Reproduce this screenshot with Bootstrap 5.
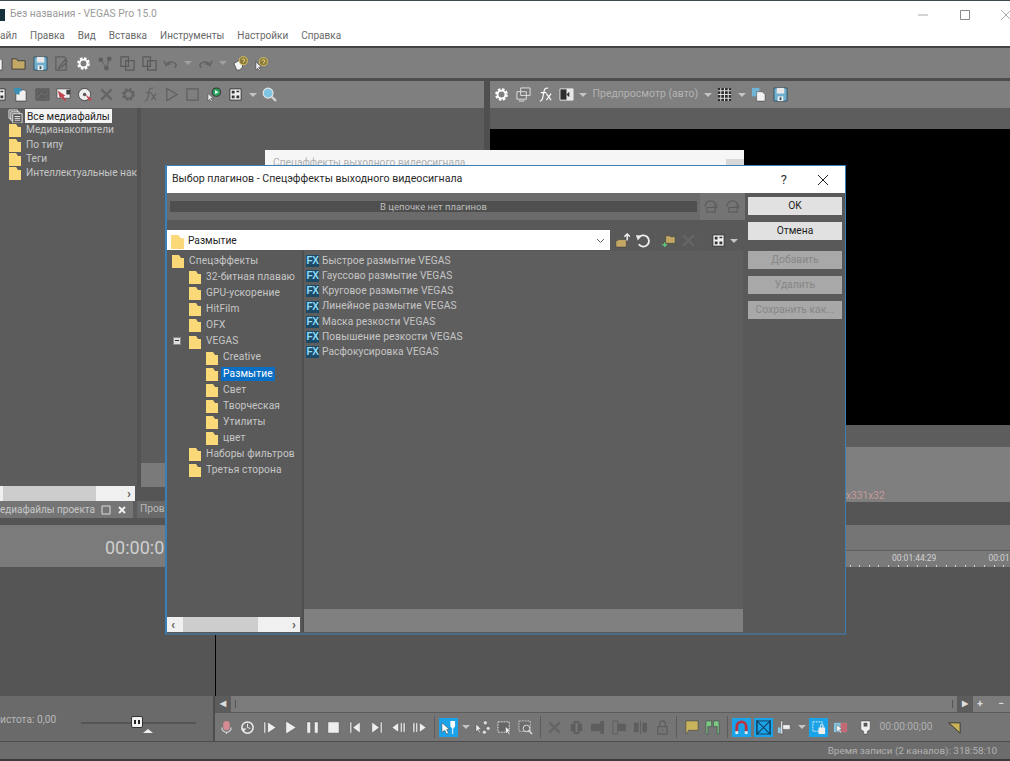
<!DOCTYPE html>
<html lang="ru">
<head>
<meta charset="UTF-8">
<title>Без названия - VEGAS Pro 15.0</title>
<link href="https://cdn.jsdelivr.net/npm/bootstrap@5.3.0/dist/css/bootstrap.min.css" rel="stylesheet">
<style>
body { width: 1010px; height: 761px; overflow: hidden; background: #555; font: 10.200px/1.2 Roboto, sans-serif; color: #c6c6c6; position: relative; }
.ic { width: 15px; height: 15px; flex: none; display: block; }
.dd { width: 0; height: 0; flex: none; border: 4px solid transparent; border-top: 4px solid #c4c4c4; border-bottom: 0; margin: 0 -1px; }
.dd.dim { border-top-color: #a0a0a0; }
.sep { width: 1px; height: 22px; background: #5c5c5c; flex: none; }

.title-row { height: 46px; background: #fff; border-top: 1px solid #3f4a4e; color: #9a9a9a; }
.cap { height: 27px; font-size: 10.300px; }
.logo { width: 5px; height: 12px; background: #16303c; margin-right: 5px; }
.win-btns { gap: 29.500px; margin-right: -2px; }
.menu { gap: 13px; color: #6a6a6a; font-size: 10px; padding-top: 2px; }
.bar-dark { height: 2px; background: #444; }
.main-tool { height: 30px; background: #7f7f7f; gap: 6.800px; padding-left: 10px; }
.main-tool .first { margin-left: -21px; }
.bar-mid { height: 3px; background: #4d4d4d; }

.upper { height: 444px; }
.left-col { width: 484px; }
.gap-col { width: 6px; background: #4f4f4f; }
.right-col { width: 520px; }
.tool { height: 27px; background: #7f7f7f; }
.tool-media { gap: 6.500px; padding-left: 12.500px; }
.tool-media .first { margin-left: -21px; }
.tool-preview { gap: 6.500px; padding-left: 4px; color: #b4b4b4; font-size: 10.500px; }

.explorer { height: 378px; background: #5c5c5c; padding-top: 1px; }
.ex-tree { width: 137px; }
.ex-tree li { height: 14.300px; padding-left: 9px; gap: 5px; white-space: nowrap; overflow: hidden; }
.ex-tree .fold { width: 12px; height: 14px; flex: none; }
.ex-tree .all { width: 15px; height: 15px; flex: none; margin-left: -1px; margin-right: -3px; }
.ex-tree .sel { background: #f4f4f4; color: #222; padding: 0 2px; height: 15px; line-height: 15px; }
.ex-split { width: 4px; background: #525252; margin-top: -1px; }
.ex-side { width: 24px; height: 24px; background: #7a7a7a; margin-top: auto; margin-bottom: -1px; }
.ex-scroll { height: 15px; width: 135px; background: #f0f0f0; }
.ex-scroll .thumb { width: 93px; height: 100%; background: #cdcdcd; margin-left: 3px; }
.arrow-txt { color: #555; font-size: 13px; font-weight: 700; }
.tabs { height: 17px; background: #5c5c5c; }
.tab-on { width: 133px; flex: none; background: #757575; padding-right: 6px; white-space: nowrap; overflow: hidden; justify-content: flex-end; gap: 6px; font-size: 10px; }
.tab-on span, .tab-on svg { flex: none; }
.tab-off { margin-left: 4px; flex: 1; background: #696969; padding-left: 3px; white-space: nowrap; overflow: hidden; color: #b8b8b8; }

.prev-gap { height: 21px; background: #5d5d5d; }
.prev-black { height: 296px; background: #000; }
.prev-a { height: 22px; background: #5d5d5d; }
.prev-info { height: 55px; background: #7f7f7f; color: #c49a9a; padding-left: 356px; }
.prev-info span { padding-top: 43px; }
.prev-b { height: 23px; background: #555; }
.left-dark { height: 7px; background: #555; }

.lower { height: 171px; }
.time-panel { width: 216px; flex: none; border-right: 1px solid #000; }
.time-box { height: 42px; background: #7b7b7b; color: #cfcfcf; font-size: 18px; padding: 3px 0 0 105px; white-space: nowrap; overflow: hidden; }
.track-head { height: 26px; background: #757575; border-bottom: 1px solid #5f5f5f; }
.ruler { height: 16px; background: #7a7a7a; font-size: 8.500px; color: #d2d2d2; white-space: nowrap; padding: 2px 0 0 676px; gap: 52px; background-image: repeating-linear-gradient(90deg, #cfcfcf 0 1px, transparent 1px 9.600px); background-size: 100% 2px; background-repeat: no-repeat; background-position: 0 100%; }
.tl-end { width: 2px; background: #4b4b4b; height: 42px; flex: none; }

.bottom { height: 45px; }
.bot-left { width: 213px; flex: none; background: #6a6a6a; color: #b8b8b8; }
.bot-gap { width: 2px; flex: none; background: #4d4d4d; }
.freq { width: 81px; flex: none; margin-top: 4px; white-space: nowrap; }
.slider { width: 115px; height: 2px; flex: none; background: #555; position: relative; margin-top: 8px; }
.slider .knob { position: absolute; left: 50px; top: -6px; width: 12px; height: 12px; background: #f2f2f2; border: 1px solid #333; border-radius: 2px; }
.slider .knob::before { content: ""; position: absolute; left: 2px; top: 3px; width: 6px; height: 4px; border-left: 2px solid #222; border-right: 2px solid #222; }
.slider .tri { position: absolute; left: 62px; top: 7px; border: 5px solid transparent; border-bottom: 4px solid #eee; border-top: 0; }
.scroll-row { height: 17px; background: #7b7b7b; border-bottom: 1px solid #5c5c5c; color: #ddd; font-weight: 700; }
.sc-btn { width: 16px; height: 100%; flex: none; background: #5c5c5c; font-size: 8px; }
.sc-tick { width: 1px; height: 8px; background: #555; }
.sc-plus { width: 14px; flex: none; text-align: center; }
.sc-minus { width: 23px; flex: none; padding-left: 5px; text-align: center; }
.transport { height: 28px; background: #757575; gap: 6.500px; padding-left: 3.500px; color: #b0b0b0; white-space: nowrap; }
.on { background: #1aa3e8; outline: 2px solid #1aa3e8; }
.status { height: 18px; background: #6c6c6c; border-top: 1px solid #4c4c4c; color: #b2b2b2; padding-right: 13px; font-size: 9.900px; }
.foot { height: 2px; background: #3a3a3a; }

.back-win { position: absolute; left: 265px; top: 150px; width: 479px; height: 17px; background: #f6f6f6; color: #b0b0b0; padding: 7px 8px 0; overflow: hidden; }
.back-win::after { content: ""; position: absolute; right: 0; bottom: 0; width: 18px; height: 8px; background: #d8d8d8; }
.dlg { position: absolute; left: 165px; top: 165px; width: 681px; height: 470px; background: #595959; border: 1px solid #3a7fb5; border-bottom: 2px solid #4a6a88; border-left-width: 2px; }
.dlg-title { height: 27px; background: #fff; color: #2a2a2a; font-size: 10.600px; padding-left: 5px; }
.dlg-title .help { font-size: 13px; margin-right: 30px; color: #333; }
.dlg-main { width: 578px; flex: none; }
.chain { height: 27px; }
.chain-bar { width: 533px; flex: none; background: #6b6b6b; padding: 8px 3px; }
.chain-in { height: 100%; background: #4f4f4f; color: #bdbdbd; font-size: 9.500px; text-align: center; line-height: 12px; }
.chain-ic { width: 45px; flex: none; background: #747474; gap: 7px; }
.combo-row { height: 31px; padding-top: 10px; }
.combo { width: 443px; height: 20px; flex: none; background: #fff; color: #222; padding: 2px 5px 0 3px; gap: 3px; }
.combo-ic { gap: 5px; padding-left: 5px; }
.panes { height: 381px; }
.tree { width: 135px; background: #5a5a5a; padding-top: 2px; letter-spacing: .12px; }
.tree li { height: 16.100px; white-space: nowrap; gap: 5px; position: relative; }
.l0 { padding-left: 5px; }
.l1 { padding-left: 22px; }
.l2 { padding-left: 39px; }
.tree .fold { width: 12px; height: 14px; flex: none; }
.tree .now { background: #0a6fc4; color: #fff; padding: 1px 2px; margin-left: -2px; }
.minus { position: absolute; left: 6px; top: 4px; width: 8px; height: 8px; background: #ddd; border: 1px solid #888; }
.minus::before { content: ""; position: absolute; left: 1px; top: 2px; width: 4px; height: 1px; background: #333; }
.tree-scroll { height: 15px; width: 133px; background: #f0f0f0; color: #555; }
.tree-scroll .thumb { width: 75px; height: 100%; background: #cdcdcd; margin-left: 8px; }
.split { width: 2px; flex: none; background: #4e4e4e; }
.fx-list { width: 439px; flex: none; }
.fx-items { height: 358px; background: #5e5e5e; padding-top: 2px; letter-spacing: .1px; }
.fx-items li { height: 15.300px; padding-left: 2px; gap: 3px; white-space: nowrap; }
.fx { width: 13px; height: 12px; background: #1d4a66; color: #8fdcf8; font: 700 10px/12px "Liberation Sans", sans-serif; letter-spacing: -.5px; text-align: center; flex: none; }
.fx-tail { height: 23px; background: #808080; }
.dlg-side { width: 100px; padding: 4px 3px 0 3px; }
.btn-pl { --bs-btn-padding-y: 0; --bs-btn-padding-x: 0; --bs-btn-font-size: 10.300px; --bs-btn-border-radius: 0; --bs-btn-border-width: 0; --bs-btn-bg: #e1e1e1; --bs-btn-color: #1d1d1d; --bs-btn-disabled-bg: #a8a8a8; --bs-btn-disabled-color: #868686; --bs-btn-disabled-opacity: 1; height: 18px; width: 94px; line-height: 18px; }
.btn-pl + .btn-pl { margin-top: 7px; }
.btn-pl + .btn-pl.add { margin-top: 11px; }
</style>
</head>
<body>
<svg width="0" height="0" class="position-absolute">
  <defs>
    <symbol id="fold" viewBox="0 0 12 14"><path d="M0 1h7l2 3h3v10H0z" fill="#fbd978"/></symbol>
    <symbol id="tan" viewBox="0 0 16 16"><path d="M1 3h5l1 2h8v9H1z" fill="#c2a765" stroke="#3c3c3c"/></symbol>
    <symbol id="save" viewBox="0 0 16 16"><path d="M1 1h14v14H1z" fill="#6fb0d0" stroke="#33505f"/><path d="M4 1h8v6H4z" fill="#e8e8e8"/><path d="M5 10h6v5H5z" fill="#f0f0f0"/><path d="M7 11h2v3H7z" fill="#33505f"/></symbol>
    <symbol id="gear" viewBox="0 0 16 16"><circle cx="8" cy="8" r="5.500" fill="none" stroke="currentColor" stroke-width="2.600" stroke-dasharray="2.600 1.700"/><circle cx="8" cy="8" r="4.200" fill="none" stroke="currentColor" stroke-width="2"/></symbol>
    <symbol id="note" viewBox="0 0 16 16"><path d="M2 1h9l2 2v12H2zM6 11l6-7 2 2-6 6-3 1z" fill="none" stroke="#5e5e5e" stroke-width="1.300"/></symbol>
    <symbol id="branch" viewBox="0 0 16 16"><g fill="#5f5f5f"><circle cx="3" cy="4" r="2.500"/><circle cx="12" cy="3" r="2.500"/><circle cx="9" cy="13" r="2.500"/></g><path d="M3 4l6 9 3-10" fill="none" stroke="#5f5f5f"/></symbol>
    <symbol id="copy" viewBox="0 0 16 16"><path d="M1 1h8v10H1zM6 5h9v10H6z" fill="#7f7f7f" stroke="#5a5a5a" stroke-width="1.300"/></symbol>
    <symbol id="allm" viewBox="0 0 16 16"><path d="M1 1h9v9H1z" fill="#666" stroke="#e4e4e4"/><path d="M3 3h9v9H3z" fill="#666" stroke="#e4e4e4"/><path d="M5 5h10v10H5z" fill="#555" stroke="#e4e4e4"/><path d="M7 8h6M7 10h6M7 12h6" stroke="#e4e4e4"/></symbol>
    <symbol id="undo" viewBox="0 0 16 16"><path d="M3 10a6 5 0 0 1 11-1l-1 4M1 5l2 5 5-2" fill="none" stroke="#636363" stroke-width="1.600"/></symbol>
    <symbol id="redo" viewBox="0 0 16 16"><path d="M13 10a6 5 0 0 0-11-1l1 4M15 5l-2 5-5-2" fill="none" stroke="#636363" stroke-width="1.600"/></symbol>
    <symbol id="help" viewBox="0 0 16 16"><path d="M1 8l5-3 4 3v4l-3 3H4z" fill="#f4f4f4" stroke="#333" stroke-width=".7"/><circle cx="11" cy="5" r="4.300" fill="#8a7b3c" stroke="#d8c060"/><path d="M9.600 4a1.500 1.500 0 1 1 1.600 2v1" fill="none" stroke="#f3e28a"/></symbol>
    <symbol id="help2" viewBox="0 0 16 16"><path d="M2 6v9l2-2 2 3 1-1-2-3h3z" fill="#f4f4f4" stroke="#333" stroke-width=".6"/><circle cx="10" cy="6" r="4.300" fill="#8a7b3c" stroke="#d8c060"/><path d="M8.600 5a1.500 1.500 0 1 1 1.600 2v1" fill="none" stroke="#f3e28a"/></symbol>
    <symbol id="docb" viewBox="0 0 16 16"><path d="M3 3h9l2 2v10H3z" fill="#f0f0f0" stroke="#333" stroke-width=".7"/><path d="M1 1h7l2 3-3 1v3H4L1 5z" fill="#3c8fb4"/></symbol>
    <symbol id="film" viewBox="0 0 16 16"><path d="M1 2h14v12H1z" fill="#666" stroke="#565656"/><path d="M3 4h10v8H3z" fill="#5c5c5c"/><path d="M3 11l4-5 3 3 3-3" fill="none" stroke="#777"/></symbol>
    <symbol id="redfilm" viewBox="0 0 16 16"><path d="M1 2h14v10H1z" fill="#f1f1f1" stroke="#3a3a3a" stroke-width=".7"/><path d="M11 3h4v5h-4z" fill="#444"/><path d="M2 4l8 5-2 1 3 4-2 1-3-4-2 1z" fill="#c0444e"/></symbol>
    <symbol id="disc" viewBox="0 0 16 16"><circle cx="7" cy="8" r="6.500" fill="#eee" stroke="#444"/><circle cx="7" cy="8" r="1.800" fill="#555"/><path d="M8 8l7 5-3 2z" fill="#c0444e"/></symbol>
    <symbol id="x" viewBox="0 0 16 16"><path d="M2.500 2.500l11 11M13.500 2.500l-11 11" stroke="#656565" stroke-width="2.600" fill="none"/></symbol>
    <symbol id="fn" viewBox="0 0 16 16"><path d="M3 15c3 0 3-3 4-8s1-6 5-6M4 6h6M10 7l5 7M15 7l-5 7" fill="none" stroke="currentColor" stroke-width="1.200"/></symbol>
    <symbol id="playo" viewBox="0 0 16 16"><path d="M3 1.500l11 6.500-11 6.500z" fill="none" stroke="#5f5f5f" stroke-width="1.300"/></symbol>
    <symbol id="stopo" viewBox="0 0 16 16"><path d="M2 2h12v12H2z" fill="none" stroke="#5f5f5f" stroke-width="1.300"/></symbol>
    <symbol id="ptrplay" viewBox="0 0 16 16"><path d="M1 7v8l2-2 2 3 1-1-2-3h3z" fill="#eee" stroke="#333" stroke-width=".5"/><circle cx="10" cy="5.500" r="5" fill="#333"/><circle cx="10" cy="5.500" r="4" fill="#2f9b58"/><path d="M8.500 3.300l4 2.200-4 2.200z" fill="#cfe"/></symbol>
    <symbol id="gridbox" viewBox="0 0 16 16"><path d="M2 2h12v12H2z" fill="#f0f0f0" stroke="#333"/><path d="M4 4h3v3H4zM9 4h3v1.500H9zM4 9h3v3H4zM9 9h3v3H9z" fill="#333"/></symbol>
    <symbol id="zoomb" viewBox="0 0 16 16"><circle cx="6.500" cy="6.500" r="5.300" fill="#7ec5e4" stroke="#e6e6e6" stroke-width="1.200"/><path d="M10.500 10.500l4.500 4.500" stroke="#d5d5d5" stroke-width="2.400"/></symbol>
    <symbol id="monitors" viewBox="0 0 16 16"><path d="M5 1h10v8H5zM1 5h10v8H1z" fill="#777" stroke="#e2e2e2"/><path d="M3 15h6" stroke="#e2e2e2"/></symbol>
    <symbol id="split" viewBox="0 0 16 16"><path d="M1 2h14v12H1z" fill="#2e2e2e" stroke="#e8e8e8"/><path d="M8 2h7v12H8z" fill="#e8e8e8"/><path d="M11 5l-3 3 3 3z" fill="#2e2e2e"/></symbol>
    <symbol id="mesh" viewBox="0 0 16 16"><path d="M1 1h14v14H1z" fill="#2e2e2e"/><path d="M1 4h14M1 8h14M1 12h14M4 1v14M8 1v14M12 1v14" stroke="#e8e8e8"/></symbol>
    <symbol id="copyb" viewBox="0 0 16 16"><path d="M1 1h8v9H1z" fill="#6fb4d4"/><path d="M6 5h6l3 3v7H6z" fill="#f2f2f2" stroke="#333" stroke-width=".5"/></symbol>
    <symbol id="mic" viewBox="0 0 16 16"><rect x="4.500" y="1" width="7" height="10" rx="3.500" fill="#d58b92"/><path d="M3 8a5 5 0 0 0 10 0M8 13v2" fill="none" stroke="#d8d8d8" stroke-width="1.200"/></symbol>
    <symbol id="loop" viewBox="0 0 16 16"><circle cx="8" cy="8" r="6" fill="none" stroke="#eee" stroke-width="1.600"/><path d="M8 4v4l3 1" fill="none" stroke="#eee"/><path d="M1 9l3 3 3-3z" fill="#eee"/></symbol>
    <symbol id="pstart" viewBox="0 0 16 16"><path d="M2 2h2v12H2zM6 2l9 6-9 6z" fill="#eee" stroke="#444" stroke-width=".5"/></symbol>
    <symbol id="play" viewBox="0 0 16 16"><path d="M3 1l11 7-11 7z" fill="#eee" stroke="#444" stroke-width=".5"/></symbol>
    <symbol id="pause" viewBox="0 0 16 16"><path d="M2 2h4v12H2zM10 2h4v12h-4z" fill="#eee" stroke="#444" stroke-width=".5"/></symbol>
    <symbol id="stop" viewBox="0 0 16 16"><path d="M2 2h12v12H2z" fill="#eee" stroke="#444" stroke-width=".5"/></symbol>
    <symbol id="prev" viewBox="0 0 16 16"><path d="M2 2h2v12H2zM13 2v12L5 8z" fill="#eee" stroke="#444" stroke-width=".5"/></symbol>
    <symbol id="next" viewBox="0 0 16 16"><path d="M12 2h2v12h-2zM3 2v12l8-6z" fill="#eee" stroke="#444" stroke-width=".5"/></symbol>
    <symbol id="bk" viewBox="0 0 16 16"><path d="M8 3v10L1 8zM10 3h2v10h-2zM13 3h2v10h-2z" fill="#eee" stroke="#444" stroke-width=".4"/></symbol>
    <symbol id="fw" viewBox="0 0 16 16"><path d="M8 3v10l7-5zM1 3h2v10H1zM4 3h2v10H4z" fill="#eee" stroke="#444" stroke-width=".4"/></symbol>
    <symbol id="cursor" viewBox="0 0 16 16"><path d="M1 3v10l3-2 2 4 2-1-2-4h3z" fill="#fff" stroke="#333" stroke-width=".5"/><path d="M10 1h5v6l-2 2v6h-1V9l-2-2z" fill="#fff"/></symbol>
    <symbol id="nodes" viewBox="0 0 16 16"><path d="M1 4v9l2-2 2 3 1-1-2-3h3z" fill="#eee" stroke="#333" stroke-width=".5"/><g fill="#ddd" stroke="#444" stroke-width=".5"><circle cx="11" cy="3" r="2.200"/><circle cx="14" cy="9" r="2.200"/><circle cx="10" cy="13" r="2.200"/></g></symbol>
    <symbol id="selbox" viewBox="0 0 16 16"><path d="M1 2h12v11H1z" fill="#666" stroke="#e0e0e0" stroke-dasharray="2 1"/><path d="M9 7v8l2-2 2 3 1-1-2-3h3z" fill="#eee" stroke="#333" stroke-width=".4"/></symbol>
    <symbol id="zoomsel" viewBox="0 0 16 16"><path d="M1 1h12v11H1z" fill="#6c6c6c" stroke="#ccc" stroke-dasharray="2 1"/><circle cx="9" cy="9" r="3.500" fill="none" stroke="#e0e0e0"/><path d="M11.500 11.500l3.500 3.500" stroke="#e0e0e0" stroke-width="1.500"/></symbol>
    <symbol id="ev1" viewBox="0 0 16 16"><path d="M5 1h6v14H5zM2 4h3v8H2zM11 4h3v8h-3z" fill="#5e5e5e"/><path d="M7 3h2v10H7z" fill="#7a7a7a"/></symbol>
    <symbol id="ev2" viewBox="0 0 16 16"><path d="M1 4h10v8H1zM11 1h4v14h-4z" fill="#5e5e5e"/></symbol>
    <symbol id="ev3" viewBox="0 0 16 16"><path d="M1 1h5v14H1z" fill="none" stroke="#5e5e5e"/><path d="M6 4h9v8H6z" fill="#5e5e5e"/></symbol>
    <symbol id="ev4" viewBox="0 0 16 16"><path d="M1 3h5v10H1zM10 3h5v10h-5z" fill="#5e5e5e"/><path d="M8 1v14" stroke="#5e5e5e"/></symbol>
    <symbol id="lock" viewBox="0 0 16 16"><path d="M3 7h10v8H3z" fill="none" stroke="#5e5e5e" stroke-width="1.300"/><path d="M5 7V4a3 3 0 0 1 6 0v3M8 10v2" fill="none" stroke="#5e5e5e" stroke-width="1.300"/></symbol>
    <symbol id="flagy" viewBox="0 0 16 16"><path d="M2 1h13v10H5l-3 4z" fill="#c8b45c" stroke="#333" stroke-width=".5"/></symbol>
    <symbol id="flagg" viewBox="0 0 16 16"><path d="M1 15V1h6v6H3v8zM15 15V1H9v6h4v8z" fill="#7dc684" stroke="#333" stroke-width=".5"/></symbol>
    <symbol id="magnet" viewBox="0 0 16 16"><path d="M3 12V7a5 5 0 0 1 10 0v5" fill="none" stroke="#b9343f" stroke-width="3"/><path d="M1.500 12h3v3h-3zM11.500 12h3v3h-3z" fill="#eee"/></symbol>
    <symbol id="bowtie" viewBox="0 0 16 16"><path d="M1 1l14 14V1L1 15z" fill="none" stroke="#123f5c" stroke-width="1.200"/><path d="M1 1h14v14H1z" fill="none" stroke="#123f5c"/></symbol>
    <symbol id="align" viewBox="0 0 16 16"><path d="M4 1h2v14H4zM6 5h8v5H6z" fill="#eee" stroke="#333" stroke-width=".4"/><path d="M1 8h3v6H1z" fill="#8cc6e0"/></symbol>
    <symbol id="grouplock" viewBox="0 0 16 16"><path d="M2 2h10v10H2z" fill="none" stroke="#eee" stroke-dasharray="2 1"/><path d="M8 8h7v7H8z" fill="#eee"/><path d="M10 8V6a1.500 1.500 0 0 1 3 0v2" fill="none" stroke="#eee"/></symbol>
    <symbol id="crossfade" viewBox="0 0 16 16"><path d="M1 3h14v10H1z" fill="#83c3df"/><path d="M8 3h7v10H8z" fill="#c46a74"/><path d="M4 5v8l2-2 2 3 1-1-2-3h3z" fill="#fff" stroke="#333" stroke-width=".4"/></symbol>
    <symbol id="marker" viewBox="0 0 16 16"><path d="M3 1h10v9l-3 2v3H6v-3l-3-2z" fill="#eee" stroke="#333" stroke-width=".5"/><path d="M6 3h4v4H6z" fill="#555"/></symbol>
    <symbol id="tri" viewBox="0 0 16 16"><path d="M2 3h12v11z" fill="#c8b25a" stroke="#333"/></symbol>
    <symbol id="chainA" viewBox="0 0 16 16"><path d="M1 8a6 6 0 0 1 12 0M10 8l3-1 1 3M3 9h9v5H3z" fill="none" stroke="#5c5c5c" stroke-width="1.200"/></symbol>
    <symbol id="upf" viewBox="0 0 16 16"><path d="M1 8h2l1-1h8v8H1z" fill="#c2a765" stroke="#333" stroke-width=".5"/><path d="M13 8V2M10 4l3-3 3 3" fill="none" stroke="#eee" stroke-width="1.600"/></symbol>
    <symbol id="back" viewBox="0 0 16 16"><path d="M4 5a6 6 0 1 1 0 7" fill="none" stroke="#eee" stroke-width="2"/><path d="M1 2l6 1-4 5z" fill="#eee"/></symbol>
    <symbol id="addf" viewBox="0 0 16 16"><path d="M5 3h4l1 1h5v7H5z" fill="#c2a765" stroke="#333" stroke-width=".5"/><path d="M4 10v5M1.500 12.500h5" stroke="#5ec77a" stroke-width="1.600"/></symbol>
  </defs>
</svg>

<div class="title-row">
  <div class="cap d-flex align-items-center">
    <span class="logo"></span>
    <span class="flex-grow-1">Без названия - VEGAS Pro 15.0</span>
    <div class="win-btns d-flex align-items-center">
      <svg width="12" height="12" viewBox="0 0 12 12"><path d="M1 6h10" stroke="#aaa"/></svg>
      <svg width="12" height="12" viewBox="0 0 12 12"><path d="M1.500 1.500h9v9h-9z" fill="none" stroke="#888"/></svg>
      <svg width="12" height="12" viewBox="0 0 12 12"><path d="M1 1l10 10M11 1L1 11" stroke="#aaa"/></svg>
    </div>
  </div>
  <div class="menu d-flex">
    <span>айл</span><span>Правка</span><span>Вид</span><span>Вставка</span><span>Инструменты</span><span>Настройки</span><span>Справка</span>
  </div>
</div>
<div class="bar-dark"></div>
<div class="main-tool d-flex align-items-center">
  <svg class="ic first"><use href="#docb"/></svg>
  <svg class="ic"><use href="#tan"/></svg>
  <svg class="ic"><use href="#save"/></svg>
  <svg class="ic"><use href="#note"/></svg>
  <svg class="ic text-white"><use href="#gear"/></svg>
  <svg class="ic"><use href="#branch"/></svg>
  <svg class="ic"><use href="#copy"/></svg>
  <svg class="ic"><use href="#copy"/></svg>
  <svg class="ic"><use href="#undo"/></svg>
  <span class="dd dim"></span>
  <svg class="ic"><use href="#redo"/></svg>
  <span class="dd dim"></span>
  <svg class="ic"><use href="#help"/></svg>
  <svg class="ic"><use href="#help2"/></svg>
</div>
<div class="bar-mid"></div>

<div class="upper d-flex">
  <div class="left-col d-flex flex-column">
    <div class="tool tool-media d-flex align-items-center">
      <svg class="ic first"><use href="#gridbox"/></svg>
      <svg class="ic"><use href="#docb"/></svg>
      <svg class="ic"><use href="#film"/></svg>
      <svg class="ic"><use href="#redfilm"/></svg>
      <svg class="ic"><use href="#disc"/></svg>
      <svg class="ic"><use href="#x"/></svg>
      <svg class="ic" style="color:#626262"><use href="#gear"/></svg>
      <svg class="ic" style="color:#626262"><use href="#fn"/></svg>
      <svg class="ic"><use href="#playo"/></svg>
      <svg class="ic"><use href="#stopo"/></svg>
      <svg class="ic"><use href="#ptrplay"/></svg>
      <svg class="ic"><use href="#gridbox"/></svg>
      <span class="dd"></span>
      <svg class="ic"><use href="#zoomb"/></svg>
    </div>
    <div class="explorer d-flex">
      <ul class="ex-tree list-unstyled m-0">
        <li class="d-flex align-items-center"><svg class="all"><use href="#allm"/></svg><span class="sel">Все медиафайлы</span></li>
        <li class="d-flex align-items-center"><svg class="fold"><use href="#fold"/></svg>Медианакопители</li>
        <li class="d-flex align-items-center"><svg class="fold"><use href="#fold"/></svg>По типу</li>
        <li class="d-flex align-items-center"><svg class="fold"><use href="#fold"/></svg>Теги</li>
        <li class="d-flex align-items-center"><svg class="fold"><use href="#fold"/></svg>Интеллектуальные нак</li>
      </ul>
      <div class="ex-split"></div>
      <div class="ex-side"></div>
    </div>
    <div class="ex-scroll d-flex align-items-center justify-content-between">
      <div class="thumb"></div><span class="arrow-txt me-1">&rsaquo;</span>
    </div>
    <div class="tabs d-flex">
      <div class="tab-on d-flex align-items-center">
        <span>едиафайлы проекта</span>
        <svg width="10" height="10" viewBox="0 0 10 10"><path d="M1 1h8v8H1z" fill="none" stroke="#ddd"/></svg>
        <svg width="10" height="10" viewBox="0 0 10 10"><path d="M2 2l6 6M8 2l-6 6" stroke="#eee" stroke-width="2"/></svg>
      </div>
      <div class="tab-off d-flex align-items-center">Пров</div>
    </div>
    <div class="left-dark"></div>
  </div>
  <div class="gap-col"></div>
  <div class="right-col d-flex flex-column">
    <div class="tool tool-preview d-flex align-items-center">
      <svg class="ic text-white"><use href="#gear"/></svg>
      <svg class="ic"><use href="#monitors"/></svg>
      <svg class="ic text-white"><use href="#fn"/></svg>
      <svg class="ic"><use href="#split"/></svg>
      <span class="dd"></span>
      <span>Предпросмотр (авто)</span>
      <span class="dd"></span>
      <svg class="ic"><use href="#mesh"/></svg>
      <span class="dd"></span>
      <svg class="ic"><use href="#copyb"/></svg>
      <svg class="ic"><use href="#save"/></svg>
    </div>
    <div class="prev-gap"></div>
    <div class="prev-black"></div>
    <div class="prev-a"></div>
    <div class="prev-info"><span class="d-block">x331x32</span></div>
    <div class="prev-b"></div>
  </div>
</div>

<div class="lower d-flex">
  <div class="time-panel">
    <div class="time-box d-flex align-items-center">00:00:00;00</div>
  </div>
  <div class="flex-grow-1">
    <div class="d-flex">
      <div class="flex-grow-1">
        <div class="track-head"></div>
        <div class="ruler d-flex align-items-start"><span>00:01:44:29</span><span>00:01</span></div>
      </div>
      <div class="tl-end"></div>
    </div>
  </div>
</div>

<div class="bottom d-flex">
  <div class="bot-left d-flex justify-content-start align-items-center">
    <span class="freq">истота: 0,00</span>
    <div class="slider"><span class="knob"></span><span class="tri"></span></div>
  </div>
  <div class="bot-gap"></div>
  <div class="flex-grow-1 d-flex flex-column">
    <div class="scroll-row d-flex align-items-center">
      <div class="sc-btn d-flex align-items-center justify-content-center">&#9664;</div>
      <div class="sc-tick ms-1"></div>
      <div class="flex-grow-1"></div>
      <div class="sc-tick me-1"></div>
      <div class="sc-btn d-flex align-items-center justify-content-center">&#9654;</div>
      <span class="sc-plus">+</span>
      <span class="sc-minus">&minus;</span>
    </div>
    <div class="transport d-flex align-items-center">
      <svg class="ic"><use href="#mic"/></svg>
      <svg class="ic"><use href="#loop"/></svg>
      <svg class="ic"><use href="#pstart"/></svg>
      <svg class="ic"><use href="#play"/></svg>
      <svg class="ic"><use href="#pause"/></svg>
      <svg class="ic"><use href="#stop"/></svg>
      <svg class="ic"><use href="#prev"/></svg>
      <svg class="ic"><use href="#next"/></svg>
      <svg class="ic"><use href="#bk"/></svg>
      <svg class="ic"><use href="#fw"/></svg>
      <span class="sep"></span>
      <svg class="ic on"><use href="#cursor"/></svg>
      <span class="dd"></span>
      <svg class="ic"><use href="#nodes"/></svg>
      <svg class="ic"><use href="#selbox"/></svg>
      <svg class="ic"><use href="#zoomsel"/></svg>
      <span class="sep"></span>
      <svg class="ic"><use href="#x"/></svg>
      <svg class="ic"><use href="#ev1"/></svg>
      <svg class="ic"><use href="#ev2"/></svg>
      <svg class="ic"><use href="#ev3"/></svg>
      <svg class="ic"><use href="#ev4"/></svg>
      <svg class="ic"><use href="#lock"/></svg>
      <span class="sep"></span>
      <svg class="ic"><use href="#flagy"/></svg>
      <svg class="ic"><use href="#flagg"/></svg>
      <span class="sep"></span>
      <svg class="ic on"><use href="#magnet"/></svg>
      <svg class="ic on"><use href="#bowtie"/></svg>
      <svg class="ic"><use href="#align"/></svg>
      <span class="dd"></span>
      <svg class="ic on"><use href="#grouplock"/></svg>
      <svg class="ic"><use href="#crossfade"/></svg>
      <svg class="ic ms-1"><use href="#marker"/></svg>
      <span>00:00:00;00</span>
      <svg class="ic ms-2"><use href="#tri"/></svg>
    </div>
  </div>
</div>
<div class="status d-flex align-items-center justify-content-end">Время записи (2 каналов): 318:58:10</div>
<div class="foot"></div>

<div class="back-win">Спецэффекты выходного видеосигнала</div>

<div class="dlg">
  <div class="dlg-title d-flex align-items-center">
    <span class="flex-grow-1">Выбор плагинов - Спецэффекты выходного видеосигнала</span>
    <span class="help">?</span>
    <svg class="me-3" width="12" height="12" viewBox="0 0 12 12"><path d="M1 1l10 10M11 1L1 11" stroke="#222"/></svg>
  </div>
  <div class="d-flex">
    <div class="dlg-main">
      <div class="chain d-flex">
        <div class="chain-bar"><div class="chain-in">В цепочке нет плагинов</div></div>
        <div class="chain-ic d-flex align-items-center justify-content-center">
          <svg class="ic"><use href="#chainA"/></svg>
          <svg class="ic"><use href="#chainA"/></svg>
        </div>
      </div>
      <div class="combo-row d-flex">
        <div class="combo d-flex align-items-center">
          <svg class="ic"><use href="#fold"/></svg>
          <span class="flex-grow-1">Размытие</span>
          <svg width="9" height="6" viewBox="0 0 9 6"><path d="M1 1l3.500 3.500L8 1" fill="none" stroke="#666"/></svg>
        </div>
        <div class="combo-ic d-flex align-items-center">
          <svg class="ic"><use href="#upf"/></svg>
          <svg class="ic"><use href="#back"/></svg>
          <span class="sep"></span>
          <svg class="ic"><use href="#addf"/></svg>
          <svg class="ic"><use href="#x"/></svg>
          <span class="sep"></span>
          <svg class="ic ms-1"><use href="#gridbox"/></svg>
          <span class="dd"></span>
        </div>
      </div>
      <div class="panes d-flex">
        <div class="d-flex flex-column">
          <ul class="tree list-unstyled m-0 flex-grow-1">
            <li class="l0 d-flex align-items-center"><svg class="fold"><use href="#fold"/></svg>Спецэффекты</li>
            <li class="l1 d-flex align-items-center"><svg class="fold"><use href="#fold"/></svg>32-битная плаваю</li>
            <li class="l1 d-flex align-items-center"><svg class="fold"><use href="#fold"/></svg>GPU-ускорение</li>
            <li class="l1 d-flex align-items-center"><svg class="fold"><use href="#fold"/></svg>HitFilm</li>
            <li class="l1 d-flex align-items-center"><svg class="fold"><use href="#fold"/></svg>OFX</li>
            <li class="l1 d-flex align-items-center"><span class="minus"></span><svg class="fold"><use href="#fold"/></svg>VEGAS</li>
            <li class="l2 d-flex align-items-center"><svg class="fold"><use href="#fold"/></svg>Creative</li>
            <li class="l2 d-flex align-items-center"><svg class="fold"><use href="#fold"/></svg><span class="now">Размытие</span></li>
            <li class="l2 d-flex align-items-center"><svg class="fold"><use href="#fold"/></svg>Свет</li>
            <li class="l2 d-flex align-items-center"><svg class="fold"><use href="#fold"/></svg>Творческая</li>
            <li class="l2 d-flex align-items-center"><svg class="fold"><use href="#fold"/></svg>Утилиты</li>
            <li class="l2 d-flex align-items-center"><svg class="fold"><use href="#fold"/></svg>цвет</li>
            <li class="l1 d-flex align-items-center"><svg class="fold"><use href="#fold"/></svg>Наборы фильтров</li>
            <li class="l1 d-flex align-items-center"><svg class="fold"><use href="#fold"/></svg>Третья сторона</li>
          </ul>
          <div class="tree-scroll d-flex align-items-center justify-content-between">
            <span class="arrow-txt ms-1">&lsaquo;</span><div class="thumb"></div><span class="flex-grow-1"></span><span class="arrow-txt me-1">&rsaquo;</span>
          </div>
        </div>
        <div class="split"></div>
        <div class="fx-list">
          <ul class="fx-items list-unstyled m-0">
            <li class="d-flex align-items-center"><span class="fx">FX</span>Быстрое размытие VEGAS</li>
            <li class="d-flex align-items-center"><span class="fx">FX</span>Гауссово размытие VEGAS</li>
            <li class="d-flex align-items-center"><span class="fx">FX</span>Круговое размытие VEGAS</li>
            <li class="d-flex align-items-center"><span class="fx">FX</span>Линейное размытие VEGAS</li>
            <li class="d-flex align-items-center"><span class="fx">FX</span>Маска резкости VEGAS</li>
            <li class="d-flex align-items-center"><span class="fx">FX</span>Повышение резкости VEGAS</li>
            <li class="d-flex align-items-center"><span class="fx">FX</span>Расфокусировка VEGAS</li>
          </ul>
          <div class="fx-tail"></div>
        </div>
      </div>
    </div>
    <div class="dlg-side d-flex flex-column">
      <button type="button" class="btn btn-pl">OK</button>
      <button type="button" class="btn btn-pl">Отмена</button>
      <button type="button" class="btn btn-pl add" disabled>Добавить</button>
      <button type="button" class="btn btn-pl" disabled>Удалить</button>
      <button type="button" class="btn btn-pl" disabled>Сохранить как...</button>
    </div>
  </div>
</div>
<script src="https://cdn.jsdelivr.net/npm/bootstrap@5.3.0/dist/js/bootstrap.bundle.min.js"></script>
</body>
</html>
